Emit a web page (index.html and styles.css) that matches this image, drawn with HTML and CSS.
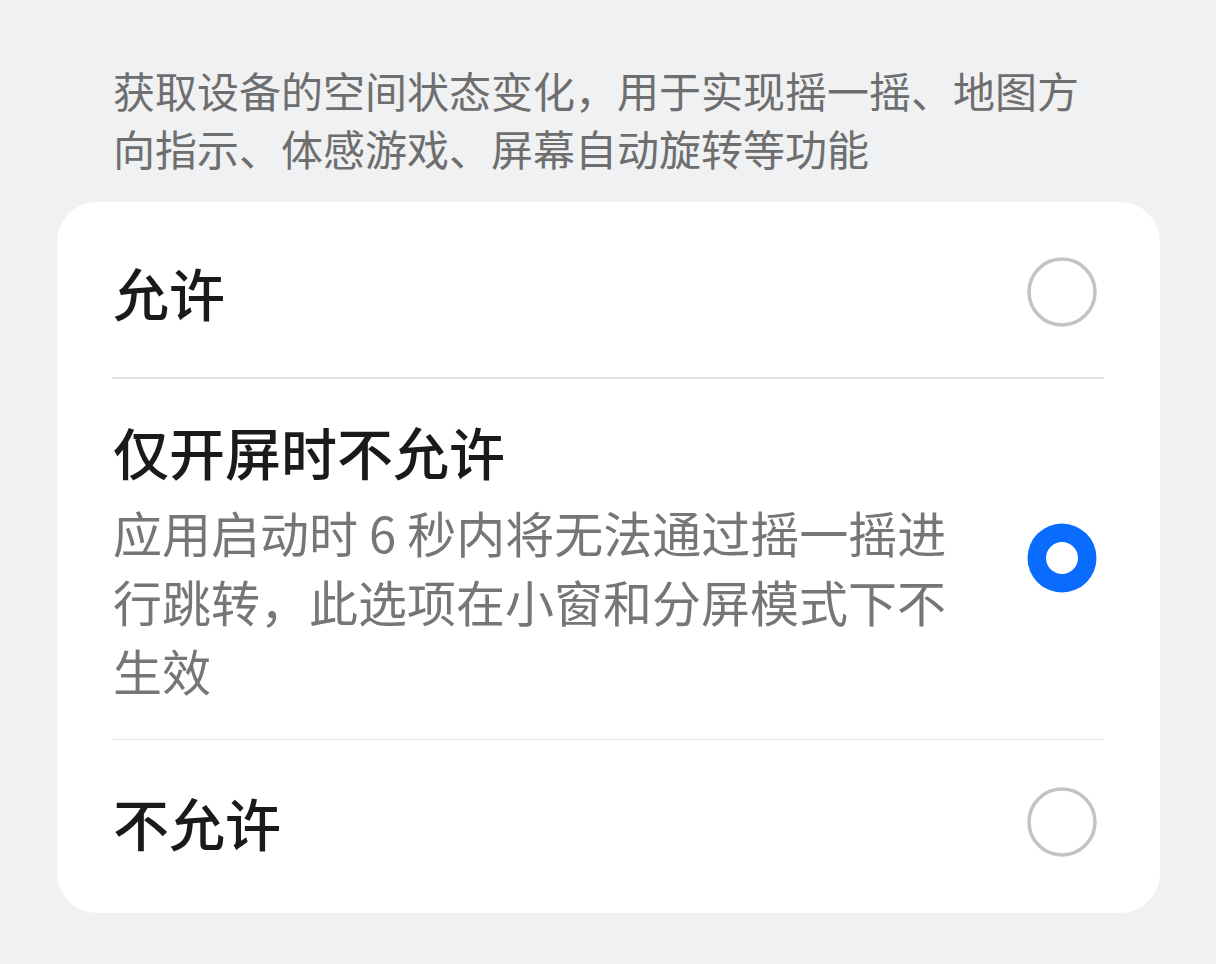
FILE: index.html
```html
<!DOCTYPE html>
<html lang="zh-CN">
<head>
<meta charset="utf-8">
<title>权限设置</title>
<link rel="stylesheet" href="styles.css">
</head>
<body>
<main class="page">
  <p class="desc">获取设备的空间状态变化，用于实现摇一摇、地图方向指示、体感游戏、屏幕自动旋转等功能</p>
  <section class="card">
    <div class="row row-first">
      <div class="text"><div class="title">允许</div></div>
      <svg class="radio" viewBox="0 0 70 70" width="70" height="70"><circle cx="35" cy="35" r="33" fill="none" stroke="#c3c3c3" stroke-width="3.5"/></svg>
    </div>
    <div class="divider"></div>
    <div class="row row-multi">
      <div class="text">
        <div class="title">仅开屏时不允许</div>
        <div class="sub">应用启动时 6 秒内将无法通过摇一摇进行跳转，此选项在小窗和分屏模式下不生效</div>
      </div>
      <svg class="radio radio-on" viewBox="0 0 70 70" width="70" height="70"><circle cx="35" cy="35" r="34.5" fill="#0a6cff"/><circle cx="35" cy="35" r="16" fill="#ffffff"/></svg>
    </div>
    <div class="divider"></div>
    <div class="row row-last">
      <div class="text"><div class="title">不允许</div></div>
      <svg class="radio" viewBox="0 0 70 70" width="70" height="70"><circle cx="35" cy="35" r="33" fill="none" stroke="#c3c3c3" stroke-width="3.5"/></svg>
    </div>
  </section>
</main>
</body>
</html>
```

FILE: styles.css
```css
html, body {
  margin: 0;
  padding: 0;
}
*, *::before, *::after {
  box-sizing: border-box;
}
body {
  background: #f0f1f3;
  font-family: "Noto Sans CJK SC", "Noto Sans", sans-serif;
  width: 1216px;
  height: 964px;
  overflow: hidden;
}
.page {
  display: flex;
  flex-direction: column;
}
.desc {
  margin: 0;
  padding: 61px 113px 25px 113px;
  font-size: 42px;
  line-height: 58px;
  color: #6e6e6e;
}
.card {
  margin: 0 56px 0 57px;
  background: #ffffff;
  border-radius: 40px;
  display: flex;
  flex-direction: column;
  padding: 0 63px 0 56px;
}
.row {
  display: flex;
  align-items: center;
  justify-content: space-between;
}
.row-first {
  height: 175px;
  padding-top: 5px;
}
.row-last {
  height: 173px;
  padding-bottom: 10px;
}
.row-multi {
  padding: 37px 0 35px 0;
}
.text {
  display: flex;
  flex-direction: column;
}
.row-multi .text {
  width: 860px;
}
.title {
  font-size: 56px;
  line-height: 70px;
  font-weight: 500;
  color: #1a1a1a;
}
.sub {
  margin-top: 11px;
  font-size: 49px;
  line-height: 69px;
  color: #767676;
}
.radio {
  flex: none;
  display: block;
}
.radio-on {
  margin-bottom: 4px;
}
.divider {
  height: 1.5px;
  background: #e2e2e2;
  margin: 0 -7px 0 -1px;
}
```
